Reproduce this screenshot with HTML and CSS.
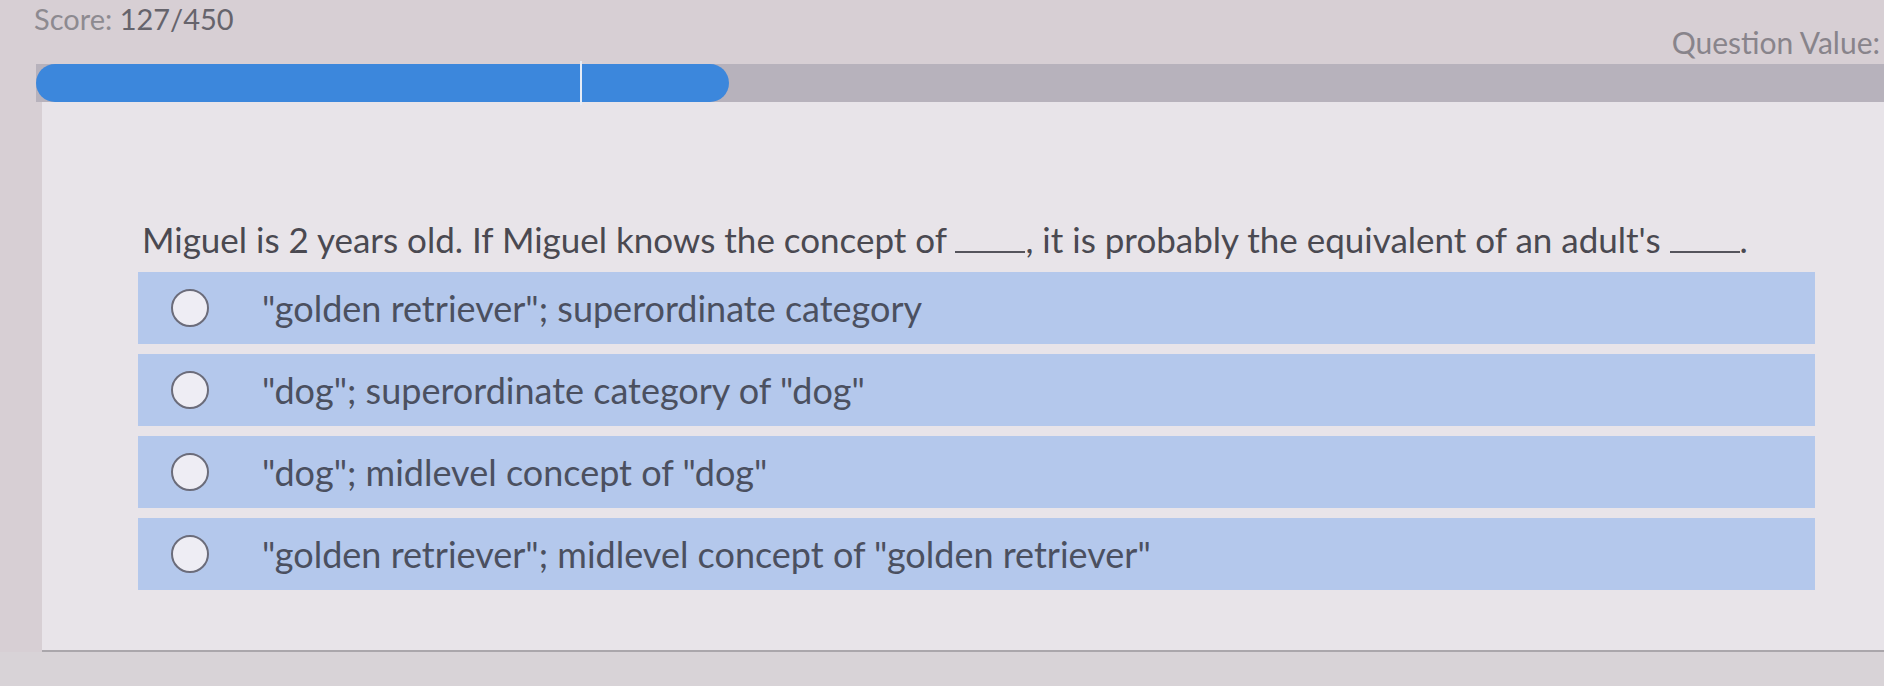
FILE: index.html
```html
<!DOCTYPE html>
<html lang="en">
<head>
  <meta charset="UTF-8">
  <meta name="viewport" content="width=device-width, initial-scale=1.0">
  <title>Quiz</title>
  <link rel="stylesheet" href="styles.css">
</head>
<body>
  <div class="quiz">
    <div class="top-bar">
      <div class="score"><span class="score-label">Score:</span> 127/450</div>
      <div class="question-value">Question Value:</div>
    </div>

    <div class="progress">
      <div class="progress-fill">
        <span class="progress-tick"></span>
      </div>
    </div>

    <div class="card">
      <p class="question">
        Miguel is 2 years old. If Miguel knows the concept of <span class="blank"></span>, it is probably the equivalent of an adult's <span class="blank"></span>.
      </p>

      <ul class="options">
        <li class="option">
          <span class="radio"></span>
          <span class="option-text">"golden retriever"; superordinate category</span>
        </li>
        <li class="option">
          <span class="radio"></span>
          <span class="option-text">"dog"; superordinate category of "dog"</span>
        </li>
        <li class="option">
          <span class="radio"></span>
          <span class="option-text">"dog"; midlevel concept of "dog"</span>
        </li>
        <li class="option">
          <span class="radio"></span>
          <span class="option-text">"golden retriever"; midlevel concept of "golden retriever"</span>
        </li>
      </ul>
    </div>
  </div>
</body>
</html>
```

FILE: styles.css
```css
    body {
      margin: 0;
      background-color: #d8d3d7;
      font-family: Lato, "Open Sans", sans-serif;
      height: 686px;
      overflow: hidden;
    }

    .quiz {
      background-color: #d7cfd4;
    }

    .top-bar {
      display: flex;
      justify-content: space-between;
      height: 64px;
      padding: 0 4px 0 34px;
    }

    .score {
      font-size: 29px;
      line-height: 38px;
      color: #66646c;
    }

    .score-label {
      color: #8d8a90;
    }

    .question-value {
      font-size: 30px;
      line-height: 36px;
      margin-top: 24px;
      color: #88848b;
    }

    /* progress track runs to the right edge */
    .progress {
      height: 38px;
      margin-left: 36px;
      background-color: #b7b2bc;
    }

    .progress-fill {
      position: relative;
      width: 693px;
      height: 100%;
      background-color: #3c87dc;
      border-radius: 19px;
    }

    .progress-tick {
      position: absolute;
      left: 544px;
      top: -3px;
      bottom: -3px;
      width: 2px;
      background-color: #e6ecf6;
    }

    .card {
      margin-left: 42px;
      height: 550px;
      padding: 116px 0 0 96px;
      box-sizing: border-box;
      background-color: #e8e4e9;
      border-bottom: 2px solid #aaa6ab;
    }

    .question {
      margin: 0 0 12px 4px;
      font-size: 35px;
      line-height: 42px;
      color: #4a4951;
    }

    .blank {
      display: inline-block;
      width: 70px;
      border-bottom: 2px solid #55545c;
    }

    .options {
      list-style: none;
      margin: 0;
      padding: 0;
      width: 1677px;
      display: flex;
      flex-direction: column;
      gap: 10px;
    }

    .option {
      display: flex;
      align-items: center;
      height: 72px;
      padding-left: 33px;
      background-color: #b4c8ec;
    }

    .radio {
      width: 34px;
      height: 34px;
      border: 2px solid #6b6c7a;
      border-radius: 50%;
      background-color: #eeedf4;
      flex-shrink: 0;
    }

    .option-text {
      margin-left: 53px;
      font-size: 36px;
      color: #4b5060;
    }
```
